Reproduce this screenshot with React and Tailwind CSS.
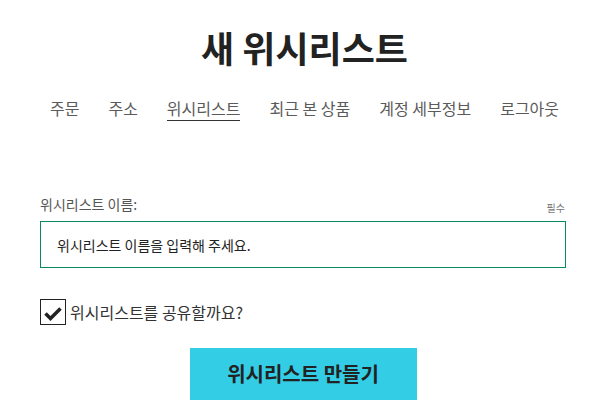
import React, { useState } from "react";

const navItems = ["주문", "주소", "위시리스트", "최근 본 상품", "계정 세부정보", "로그아웃"];

const App = () => {
  const [name, setName] = useState("");
  const [shared, setShared] = useState(true);

  return (
    <div
      className="w-[609px] h-[411px] bg-white overflow-hidden"
      style={{ fontFamily: '"Noto Sans CJK KR", "Noto Sans", sans-serif' }}
    >
      <h1 className="pt-[22px] text-center text-[36px] leading-[50px] font-bold text-[#222]">
        새 위시리스트
      </h1>

      <nav className="mt-[24px] flex justify-center gap-[29px] text-[16px] leading-[24px] text-[#5a5a5a]">
        {navItems.map((item) => (
          <a
            key={item}
            href="#"
            className={item === "위시리스트" ? "border-b border-[#333]" : "border-b border-transparent"}
          >
            {item}
          </a>
        ))}
      </nav>

      <form className="ml-[40px] mt-[73px] w-[526px]" onSubmit={(e) => e.preventDefault()}>
        <div className="flex items-end justify-between">
          <label className="text-[14px] leading-[20px] text-[#555]">위시리스트 이름:</label>
          <span className="text-[10px] leading-[12px] text-[#777] mr-[1px]">필수</span>
        </div>
        <input
          type="text"
          value={name}
          onChange={(e) => setName(e.target.value)}
          placeholder="위시리스트 이름을 입력해 주세요."
          className="mt-[7px] block w-full h-[47px] border border-[#0a8a5c] px-[16px] text-[14px] text-[#222] placeholder:text-[#222] outline-none"
        />

        <label className="mt-[31px] flex items-center gap-[4px] cursor-pointer">
          <span
            onClick={() => setShared(!shared)}
            className="flex h-[26px] w-[26px] items-end justify-center pb-[3px] border border-[#222] bg-white"
          >
            {shared && (
              <svg width="20" height="16" viewBox="0 0 20 16">
                <path d="M2.5 8.5 L7.5 13.5 L17.5 3.5" fill="none" stroke="#222" strokeWidth="3.5" />
              </svg>
            )}
          </span>
          <span className="text-[16px] leading-[24px] text-[#333]">위시리스트를 공유할까요?</span>
        </label>

        <div className="mt-[23px] flex justify-center">
          <button
            type="submit"
            className="h-[52px] w-[227px] bg-[#33cde5] text-[20px] font-bold text-[#222]"
          >
            위시리스트 만들기
          </button>
        </div>
      </form>
    </div>
  );
};

export default App;
